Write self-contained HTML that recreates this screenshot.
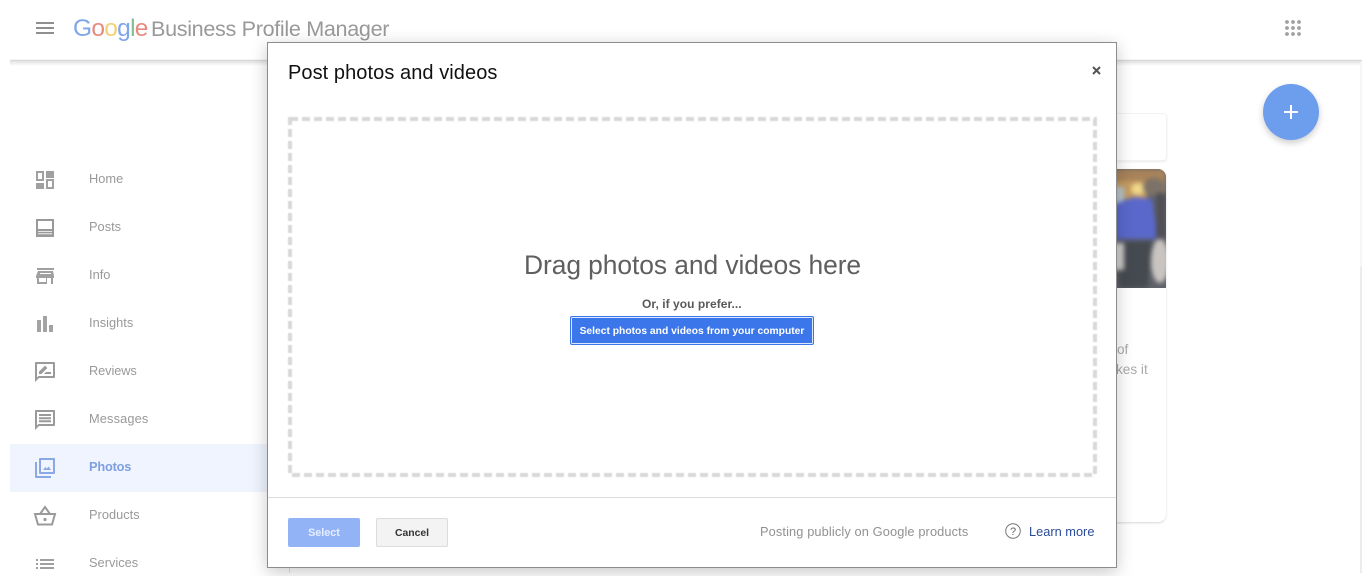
<!DOCTYPE html>
<html><head><meta charset="utf-8"><style>
html,body{margin:0;padding:0;width:1362px;height:573px;overflow:hidden;background:#fff;font-family:"Liberation Sans",sans-serif}
.a{position:absolute;white-space:nowrap}
.nav{left:89px;font-size:12.8px;color:#999;line-height:16px;letter-spacing:.02px}
svg{position:absolute;overflow:visible}
</style></head><body>
<div class="a" style="left:10px;top:60px;width:1352px;height:2px;background:#cfcfcf;filter:blur(.5px)"></div>
<div class="a" style="left:10px;top:61px;width:1352px;height:5px;background:linear-gradient(#e2e2e2,#fff)"></div>
<div class="a" style="left:1360px;top:62px;width:2px;height:511px;background:#f6f6f6"></div>
<div class="a" style="left:1360px;top:267px;width:2px;height:306px;background:#ececec"></div>
<div class="a" style="left:289px;top:560px;width:1px;height:13px;background:#e0e0e0"></div>

<div class="a" style="left:36px;top:22px;width:18px;height:2px;background:#8f8f8f;box-shadow:0 5px 0 #8f8f8f,0 10px 0 #8f8f8f"></div>
<div class="a" style="left:73px;top:13px;font-size:24.5px;line-height:32px;letter-spacing:-.72px"><span style="color:#7ea6ea">G</span><span style="color:#e88a80">o</span><span style="color:#f2d275">o</span><span style="color:#7ea6ea">g</span><span style="color:#7fc08e">l</span><span style="color:#e88a80">e</span></div>
<div class="a" style="left:151px;top:14px;font-size:21.6px;line-height:30px;color:#999;letter-spacing:-.33px">Business Profile Manager</div>

<svg style="left:1285px;top:20px" width="16" height="16" fill="#a0a0a0"><circle cx="2" cy="2" r="1.9"/><circle cx="8" cy="2" r="1.9"/><circle cx="14" cy="2" r="1.9"/><circle cx="2" cy="8" r="1.9"/><circle cx="8" cy="8" r="1.9"/><circle cx="14" cy="8" r="1.9"/><circle cx="2" cy="14" r="1.9"/><circle cx="8" cy="14" r="1.9"/><circle cx="14" cy="14" r="1.9"/></svg>

<div class="a" style="left:10px;top:444px;width:258px;height:48px;background:#eff4fe"></div>

<svg style="left:33px;top:168px" width="24" height="24" fill="#a0a0a0"><path d="M3 3h8v10H3zm2 2v6h4V5zM13 3h8v7h-8zM13 11h8v10h-8zm2 2v6h4v-6zM3 15h8v6H3z" fill-rule="evenodd"/></svg>
<svg style="left:33px;top:216px" width="24" height="24" fill="#999"><path fill-rule="evenodd" d="M3 3h18v18H3zm2 2v8h14V5zm0 10v.8h14V15zm0 2.400v.8h14v-.8z"/></svg>
<svg style="left:33px;top:264px" width="24" height="24" fill="#a0a0a0"><path fill-rule="evenodd" d="M4 4h17v2H4zM5 7h15l1 5v2h-1v6h-2v-6h-4v6H4v-6H3v-2zm1 7v4h7v-4zM7 10h11V9H7z"/></svg>
<svg style="left:33px;top:312px" width="24" height="24" fill="#a3a3a3"><path d="M4 8h4v12H4zM10 4h4v16h-4zM16 13h4v7h-4z"/></svg>
<svg style="left:33px;top:360px" width="24" height="24" fill="#9a9a9a"><path fill-rule="evenodd" d="M3 2h18a1 1 0 0 1 1 1v14a1 1 0 0 1-1 1H6l-4 4V3a1 1 0 0 1 1-1zm1 2v13.500L5.500 16H20V4z"/><path d="M6 14v-2.400l6-6 2.400 2.400-6 6zM11 14l2-2h5v2z"/></svg>
<svg style="left:33px;top:408px" width="24" height="24" fill="#9a9a9a"><path fill-rule="evenodd" d="M3 2h18a1 1 0 0 1 1 1v14a1 1 0 0 1-1 1H6l-4 4V3a1 1 0 0 1 1-1zm1 2v13.500L5.500 16H20V4z"/><path d="M6 6h12v2H6zM6 9.200h12v2H6zM6 12.300h12v2H6z"/></svg>
<svg style="left:33px;top:456px" width="24" height="24" fill="#8aa8e6"><path fill-rule="evenodd" d="M7 2h14a1 1 0 0 1 1 1v14a1 1 0 0 1-1 1H7a1 1 0 0 1-1-1V3a1 1 0 0 1 1-1zm1 2v12h12V4z"/><path d="M2 6h2v14h14v2H3a1 1 0 0 1-1-1zM10 14l2.300-3 1.500 1.800 1.700-2.300 2.500 3.500z"/></svg>
<svg style="left:33px;top:504px" width="24" height="24"><path d="M2 10h20l-3 10.500H5zM7 10l5-7 5 7" fill="none" stroke="#9a9a9a" stroke-width="2"/><circle cx="12" cy="15.500" r="1.600" fill="#9a9a9a"/></svg>
<svg style="left:33px;top:552px" width="24" height="24" fill="#a0a0a0"><path d="M3 7h2v2H3zM3 11h2v2H3zM3 15h2v2H3zM7 7h14v2H7zM7 11h14v2H7zM7 15h14v2H7z"/></svg>

<div class="a nav" style="top:171px">Home</div>
<div class="a nav" style="top:219px">Posts</div>
<div class="a nav" style="top:267px">Info</div>
<div class="a nav" style="top:315px">Insights</div>
<div class="a nav" style="top:363px;letter-spacing:-.1px">Reviews</div>
<div class="a nav" style="top:411px;letter-spacing:.13px">Messages</div>
<div class="a nav" style="top:459px;color:#7f9fdf;font-weight:700;letter-spacing:-.2px">Photos</div>
<div class="a nav" style="top:507px">Products</div>
<div class="a nav" style="top:555px">Services</div>

<div class="a" style="left:1100px;top:113px;width:67px;height:48px;background:#fff;border:1px solid #f3f3f3;border-radius:4px;box-sizing:border-box;box-shadow:0 1px 2px rgba(0,0,0,.08)"></div>
<div class="a" style="left:1100px;top:169px;width:66px;height:353px;background:#fff;border-radius:8px;box-shadow:0 1px 2px rgba(0,0,0,.16)"></div>
<div class="a" style="left:1100px;top:169px;width:66px;height:119px;border-radius:8px 8px 0 0;overflow:hidden;background:#64666c">
 <svg width="66" height="119" style="left:0;top:0;filter:blur(2.4px)">
  <rect width="66" height="119" fill="#5e6068"/>
  <rect width="66" height="24" fill="#a8835a"/>
  <rect x="14" y="12" width="33" height="18" fill="#c49a60"/>
  <ellipse cx="38" cy="20" rx="7" ry="6" fill="#f0d88a"/>
  <ellipse cx="54" cy="18" rx="11" ry="9" fill="#7c7268"/>
  <rect x="14" y="18" width="10" height="20" fill="#b4c4cc"/>
  <path d="M12 36l22-8 18 2 6 40H12z" fill="#5a68cc"/>
  <rect x="56" y="24" width="10" height="46" fill="#504f55"/>
  <path d="M18 72h34l-4 47H20z" fill="#454a50"/>
  <rect x="12" y="74" width="12" height="27" fill="#cfcdca"/>
  <ellipse cx="60" cy="92" rx="9" ry="22" fill="#c9c4c0"/>
 </svg>
</div>
<div class="a" style="left:1117px;top:340px;font-size:13.6px;line-height:20px;color:#aaa">of</div>
<div class="a" style="left:1117px;top:360px;width:32px;overflow:hidden;font-size:13.6px;line-height:20px;color:#aaa;text-indent:-1px">kes it</div>

<div class="a" style="left:1263px;top:84px;width:56px;height:56px;border-radius:50%;background:#6d9eee;box-shadow:0 3px 7px rgba(0,0,0,.2)"></div>
<div class="a" style="left:1284px;top:111px;width:14px;height:2px;background:#fff"></div>
<div class="a" style="left:1290px;top:105px;width:2px;height:14px;background:#fff"></div>

<div class="a" style="left:267px;top:42px;width:850px;height:526px;box-sizing:border-box;background:#fff;border:1px solid #8c8c8c;box-shadow:0 4px 16px rgba(0,0,0,.22)"></div>
<div class="a" style="left:288px;top:61px;font-size:20px;line-height:24px;color:#111;letter-spacing:.07px">Post photos and videos</div>
<svg style="left:1092px;top:66px" width="9" height="9"><path d="M1 1l7 7M8 1L1 8" stroke="#555" stroke-width="2"/></svg>

<svg style="left:288px;top:117px;filter:blur(.6px)" width="809" height="360"><rect x="2" y="2" width="805" height="356" fill="none" stroke="#d8d8d8" stroke-width="4" stroke-dasharray="8 4"/></svg>

<div class="a" style="left:524px;top:247px;font-size:26.4px;line-height:36px;color:#5f5f5f;letter-spacing:-.07px">Drag photos and videos here</div>
<div class="a" style="left:642px;top:296px;font-size:12px;line-height:16px;font-weight:700;color:#595959;letter-spacing:.05px">Or, if you prefer...</div>
<div class="a" style="left:570px;top:316px;width:244px;height:29px;box-sizing:border-box;background:#3b76ea;border:1px solid #3b76ea;box-shadow:inset 0 0 0 1px #dce8ff;border-radius:2px;color:#fff;font-size:10.300px;font-weight:700;line-height:29px;text-align:center">Select photos and videos from your computer</div>

<div class="a" style="left:268px;top:497px;width:848px;height:1px;background:#ddd"></div>
<div class="a" style="left:288px;top:518px;width:72px;height:29px;border-radius:2px;background:#92b4f7;color:#e6eeff;font-size:10.800px;font-weight:700;line-height:30px;text-align:center">Select</div>
<div class="a" style="left:376px;top:518px;width:72px;height:29px;box-sizing:border-box;border:1px solid #dcdcdc;border-radius:2px;background:#f3f3f3;color:#333;font-size:10.400px;font-weight:700;line-height:29px;text-align:center">Cancel</div>
<div class="a" style="left:760px;top:524px;font-size:12.800px;line-height:16px;color:#919191;letter-spacing:.12px">Posting publicly on Google products</div>
<svg style="left:1005px;top:523px" width="16" height="16"><circle cx="8" cy="8" r="7.300" fill="none" stroke="#777" stroke-width="1"/><text x="8" y="12" font-family="Liberation Sans" font-size="11" text-anchor="middle" fill="#666">?</text></svg>
<div class="a" style="left:1029px;top:524px;font-size:12.800px;line-height:16px;color:#2a4a9a">Learn more</div>
</body></html>
